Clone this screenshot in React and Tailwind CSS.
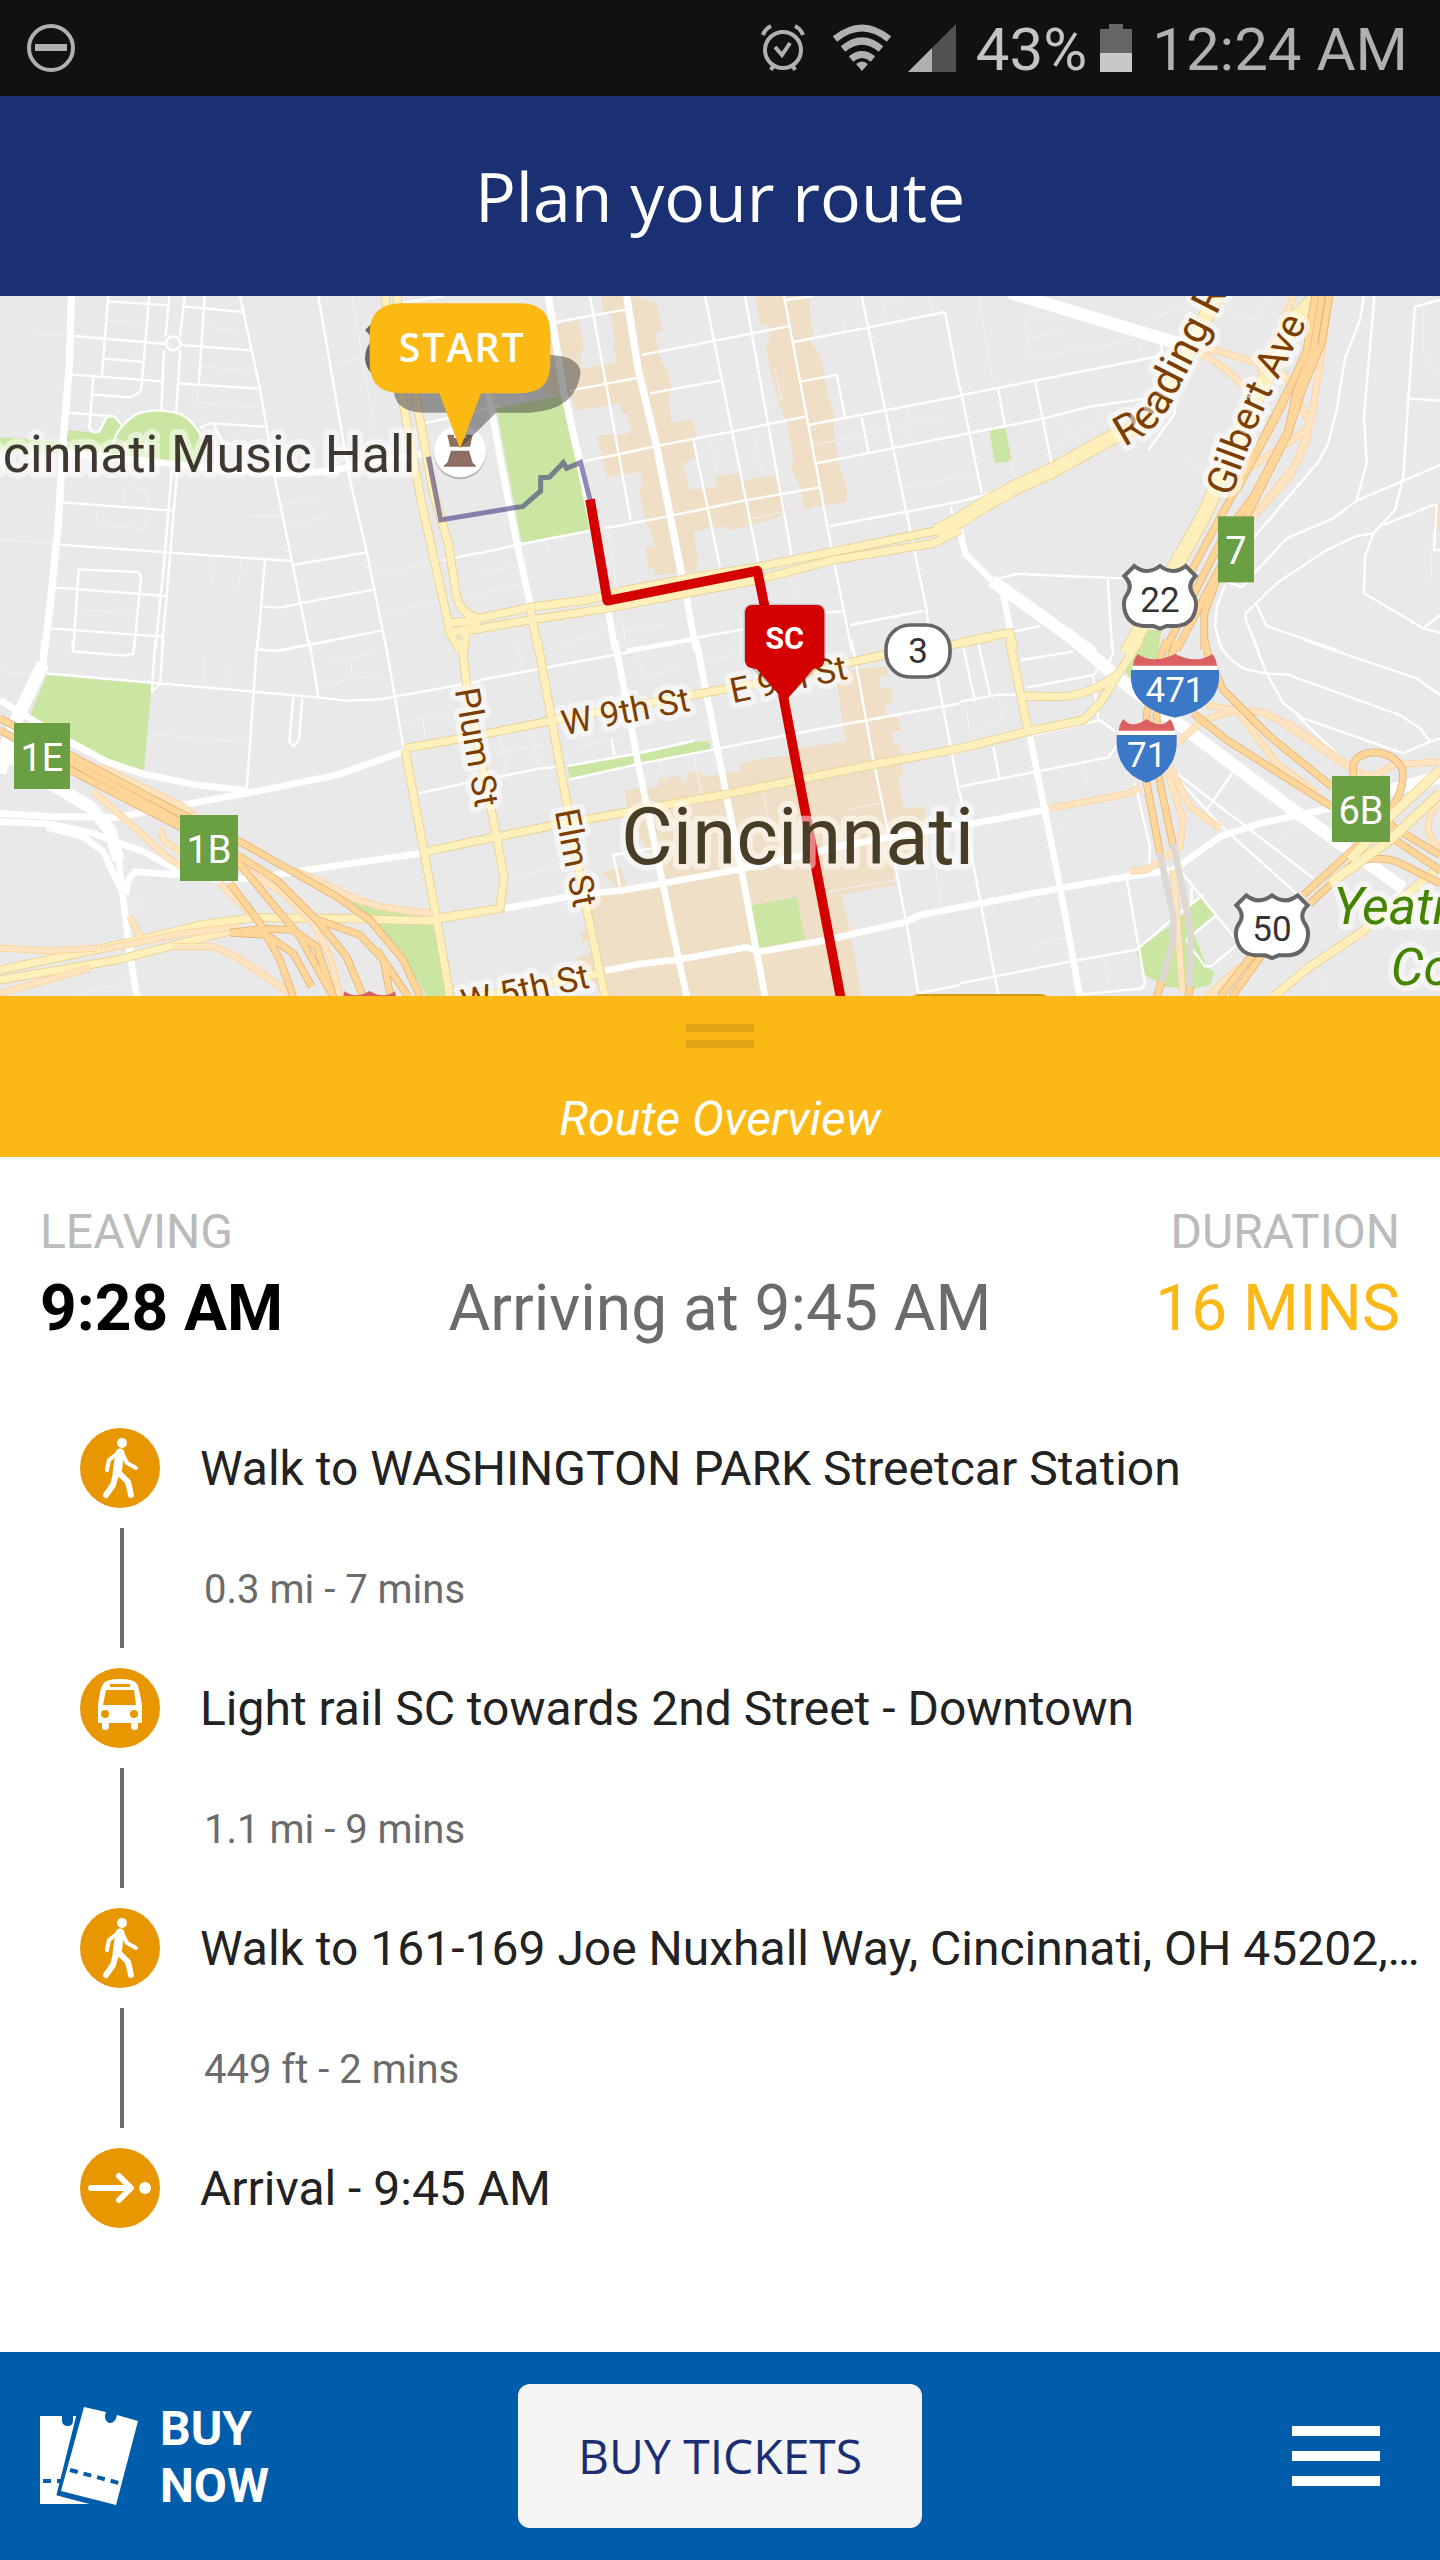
import React from "react";

// Map geometry, one entry per map tile. x / y is the origin of the tile.
const tiles = [
  {
    id: "nw",
    x: 0,
    y: -18,
    parks: [
      "M340 460Q362 400 410 372Q470 345 540 370Q585 400 605 450L602 524L330 500Z",
      "M205 420L300 430L322 380L345 382L368 408L340 450L330 502L190 484Z",
      "M0 442L195 455L190 490L0 482Z",
    ],
    shops: [],
    faint: [
      "M90 132L220 138M322 92L440 98M612 112L735 122M605 230L765 242M592 285V338L780 353M1000 220L1085 205M1055 18L1125 420",
      "M378 592L435 596L445 610L435 710L430 716L290 706V650M375 592L373 645M845 645L950 625M760 678L845 680M860 703L990 678",
      "M0 748L178 762M644 795L636 885M722 805L718 895M1120 852L1440 790M1145 970L1440 905M228 958L410 972M1100 260L1200 240",
    ],
    thin: [
      "M325 18L305 265M325 34L508 46M448 18L424 295Q420 312 390 322L280 314M508 18L497 140M492 180L484 360M554 18L540 140M541 180L528 370",
      "M519 139A21 21 0 1 0 520 139M554 50L730 66M614 18L596 285M222 138L497 162M541 165L753 181M312 206L432 216M216 254L490 274M536 280L777 296",
      "M280 262L268 410Q278 438 300 420L322 378L205 368M322 378L345 380L367 408M340 460Q350 410 410 372Q470 350 540 372Q580 390 605 440M600 415Q620 400 640 400L795 410M640 400L668 460L790 468",
      "M720 18L780 296L828 580L878 825L930 1080M955 18L1050 570L1100 785L1160 1080M185 637L522 662M178 764L500 787L872 813M878 825L1100 787",
      "M532 540L500 920L485 1080M515 540L495 790L466 1080M162 892L500 918M220 1080L236 838L410 846Q425 848 422 870L402 1080M150 1015L488 1040",
      "M795 810L772 1078M788 950L840 953L900 940L1125 898M770 1078L830 1083L1145 1022M1200 40L1330 18M1270 400L1440 365M1330 810L1440 788",
    ],
    mid: ["M190 488L320 500L520 522L680 540L850 550L980 545L1100 520L1275 490"],
    wide: ["M214 18L208 230L190 440L175 700L150 950L134 1080"],
    yellow: [
      "M1155 18L1215 370L1265 640L1345 1000L1350 1030L1380 1080",
      "M1190 18L1260 390L1300 610L1345 760L1370 920Q1385 975 1440 985",
      "M1345 1000L1440 990M1345 1028L1440 1012M1400 1010L1390 1090",
    ],
    broad: [],
    ramp: [],
    highway: [],
  },
  {
    id: "n",
    x: 1440,
    y: -18,
    parks: ["M48 355L250 315L330 720L125 760Z"],
    shops: [
      "M190 310L165 120L298 90L312 180L300 185L305 235L395 220L410 215L398 160L405 150L392 75L370 65L365 18H460L530 40L548 120L525 130L545 220L562 235L575 300L565 330L575 400L635 388L650 440L640 450L648 505L610 520L628 600L710 590L705 560L775 548L785 572L895 553L920 670L870 690L740 722L735 708L640 725L655 810L645 845L525 855L515 830H505L497 775L525 765L510 720L500 710L475 590L490 585L480 545L380 562L365 490L350 445L360 435L450 430L455 420L440 370L425 372L420 340L285 363L275 320Z",
      "M825 18H985L998 130L990 150L1012 185L1020 190L1038 280L1060 370L1062 440L1080 530L1100 590V635L972 658L960 590L935 540L940 500L920 400L900 350L870 240L855 160L870 150L865 105H842Z",
    ],
    faint: [
      "M690 450L712 555M820 420L850 560M860 340L910 325M885 235L905 330M1000 465L1400 382M1265 595L1440 560M1280 350L1300 460M1040 325L1085 318",
      "M385 730L440 1080M0 850L110 828M0 910L120 885M200 755L202 790M1210 40L1280 25M1215 40V80M1345 18L1360 70M800 690L915 665M925 860L980 1020M1090 90V120",
      "M400 1030L560 1000M230 1060L360 1035",
    ],
    thin: [
      "M205 100L440 58M330 18L452 690M270 302L480 262M305 515L420 492L520 470L770 422L975 380M485 195L930 108M510 310L720 272M675 18L835 815M795 18L935 795",
      "M912 18L1065 830L1115 1080M915 30L1000 18M940 156L1150 115L1395 66M960 275L1070 255L1095 380M985 405L1440 318M1010 520L1440 435",
      "M1145 18L1340 960L1350 1080M1395 66L1440 300M0 790L110 765L330 722M375 715L560 680L790 632L1020 592M640 450L720 830M1050 708L1440 635",
      "M1145 380L1165 485M440 1080L790 1018M1035 968L1095 963M1110 1005L1330 963M1412 650L1425 700M0 358L60 348",
    ],
    mid: ["M25 310L75 580L115 780L150 940", "M385 960L405 1080", "M620 920L628 970L648 1080"],
    wide: ["M205 18L250 300L300 520L382 920", "M440 18L475 240L530 470L575 700L605 855"],
    yellow: [
      "M-60 998L150 952L320 930L440 900L640 862L840 830L1060 785L1380 720L1440 690",
      "M-60 1026L150 990L380 955L830 870L1060 810L1360 760L1440 720",
      "M152 960L175 1080",
    ],
    broad: [],
    ramp: [],
    highway: [],
  },
  {
    id: "ne",
    x: 2880,
    y: -18,
    parks: ["M88 422L137 415L155 512L105 520Z"],
    shops: ["M1425 638H1440V722H1418Z"],
    faint: [
      "M55 18L100 290M190 75L215 205L530 148L545 200M205 145L310 125M190 85L265 72M570 80L700 50L780 18M800 55L880 90L935 18",
      "M155 265V285M305 375L320 450L280 478M320 450L430 385L420 355M0 558L50 550M150 510L165 575M705 475Q680 500 700 520L740 550M1390 50V180Q1395 230 1440 245M1418 720L1412 880",
    ],
    thin: [
      "M0 316L225 272L600 198M0 435L250 386L390 350L560 325M0 635L130 600M0 290L65 610M115 298L135 410M225 272L275 522M565 480L645 370V340M605 160V185L580 215",
      "M1212 18L1200 90L1155 205L1130 360L1105 460L1075 515L880 745M1243 18L1212 380L1220 520L1190 630M1440 30L1365 50L1345 325L1440 332",
      "M1345 325L1330 560L1305 660L1240 730L1215 800L1212 910L1390 1015L1440 1028M1390 1015L1440 975M1440 525L1190 632L1120 685L980 745L845 892L800 875",
      "M1240 730L1190 738L1100 780L950 880L857 970V990L895 1080M890 945L920 1008L1130 1080M795 885L770 950L765 1010L785 1080",
      "M1270 705L1420 645H1430L1422 780H1440M118 865L170 852L490 865M443 868L457 1080M160 1025L240 1008",
    ],
    mid: ["M0 720L15 790L95 870", "M125 890L150 1015"],
    wide: [],
    boulevard: ["M150 8L660 162", "M95 872L400 1090"],
    yellow: ["M0 1058L150 1028L162 1080"],
    broad: [
      "M-70 725L0 690L70 645L170 590L270 545L460 440L570 395L650 250L770 18",
      "M1075 18L1010 80L900 300L820 480L730 680L640 840L500 1090",
    ],
    ramp: [
      "M1000 18L960 120L900 250M1110 18L1060 350L1040 440L990 560L880 680",
      "M700 180L760 180L880 215L980 260L1045 390L1040 450L1010 520L880 680M720 190Q800 230 850 290M1040 420L860 540",
    ],
    highway: [
      "M1065 18L1040 180L1000 270L860 540L760 720L680 870",
      "M1085 18L1060 180L1010 300L985 420L880 620L790 740L615 1080",
      "M1108 18L1085 160L1030 290L985 430L860 680L650 1080",
      "M1000 270L960 360L830 600M770 870L733 970V1080",
    ],
  },
  {
    id: "sw",
    x: 0,
    y: 1032,
    parks: [
      "M140 105L455 133L432 392L320 355L205 300L90 225Z",
      "M1050 783L1140 810L1290 835L1308 870L1345 1070H1280L1200 930L1120 840Z",
    ],
    shops: [],
    faint: [
      "M0 95L135 102M450 282L740 307M615 40L610 135M690 78L688 148M995 65L1130 38M1050 55L1060 118M955 138L1140 100M1205 248L1360 215M1268 240L1280 305M1345 150L1355 215M385 792H450M220 1065L390 1028",
    ],
    thin: [
      "M140 100L760 155L955 172L1040 182L1140 178L1440 123M466 0L455 155L480 132L490 0M772 0L740 450M880 170L868 305L880 320L897 300L907 175M928 0L955 170",
      "M1155 0L1210 320M218 0V34L370 47L400 42L403 0M775 28L830 33L1005 0M1255 460L1440 420",
    ],
    mid: [
      "M0 180L80 230L200 300L320 365L430 402L590 435L735 450",
      "M530 498L740 460L1010 405L1210 335",
      "M0 520L150 530L350 532L530 500",
      "M0 545L150 552L280 580L430 635L530 690L650 718L760 715L920 690L1260 640",
      "M140 562L250 590L310 635L340 700L370 760",
      "M540 705L405 695L385 720L378 765",
      "M355 650L370 780L390 940L410 1070",
    ],
    wide: ["M134 0L130 70L60 210"],
    boulevard: ["M130 70L60 215L0 360", "M0 330L150 430L270 500L330 570L355 660", "M60 210L20 330L0 400"],
    yellow: [
      "M1215 325L1440 285M1215 328L1310 838L1350 1070M1280 635L1440 600M1310 838L1440 815",
      "M0 990L400 905L600 855L760 833L1000 835L1310 843M0 1020L350 960L700 870",
    ],
    broad: [],
    ramp: [
      "M300 380L550 500L600 545M280 455L400 560L500 650L560 690",
      "M485 565L490 600L560 650L720 680L850 760L940 850L990 950L1020 1070M660 730L750 820",
      "M880 690L950 720L1060 775L1140 800L1300 822M0 925L150 932L290 925M0 1060L270 985M390 830L420 890",
      "M520 920L640 920L700 945L880 1065M300 930L550 880L720 860",
    ],
    highway: [
      "M0 235L210 345L540 520L720 605L1010 770L1110 840L1210 960L1260 1070",
      "M0 270L210 390L500 540L720 650L830 720L950 840L1040 950L1090 1070",
      "M210 365L540 545L700 650L800 770L900 890L960 1000L1000 1070",
      "M690 730L780 850L840 960L880 1070M690 878L790 866L880 870L950 920L1000 1070M690 878L800 885L880 940L935 1040",
      "M950 838L1080 885L1150 960L1170 1060M1130 930L1225 1070",
    ],
  },
  {
    id: "s",
    x: 1440,
    y: 1032,
    parks: [
      "M262 380L465 345L640 306L688 303L692 330L485 368L270 415Z",
      "M810 797L950 771L975 898L835 925Z",
    ],
    shops: [
      "M435 450L535 440V418L600 408L605 425L620 420V398L660 392L668 410L780 393L785 370L850 355L940 345L955 325L1098 303L1090 260L1070 120L1125 85L1220 80L1225 105L1197 115L1200 145L1235 142L1240 185L1215 195L1222 230L1255 232L1262 270L1235 280L1240 310L1262 318L1268 400L1255 415L1272 505L1335 500L1345 620L1240 660L1245 735L1085 765L1110 870L1145 1070H390L300 985L290 948L335 940L330 905L308 908L303 875L325 870L315 770L420 755L365 695L425 682L440 740L550 720L500 620L450 560Z",
    ],
    faint: [
      "M110 0L130 90M60 280L80 400M150 250L175 385M0 350L210 310M90 710L250 680M470 20L490 110L595 90M300 320L420 295M540 360L560 430M640 340L665 460M660 65L790 40M1045 755L1245 720M850 460L870 560M1100 510L1200 490M1360 640L1385 800",
    ],
    thin: [
      "M0 120L640 0M60 410L180 385L250 380M262 378L465 342L640 303M270 418L485 370L1000 270L1230 228L1440 190M1115 0L1180 360L1250 700L1285 880L1315 1060L1440 1035",
      "M1370 100L1440 470M395 295L403 345M420 740L400 645L515 625",
    ],
    mid: [
      "M405 0L470 350L550 740L620 1070",
      "M648 0L740 470L790 720L855 1070",
      "M75 805L310 762L420 752L550 730L780 688L1100 615L1440 555",
      "M375 992L480 972L600 958L800 922L840 935L1040 900L1280 845L1320 825L1440 802",
    ],
    wide: [],
    yellow: [
      "M172 0L215 240L310 760L375 1070",
      "M-55 0L-40 140L0 340L50 590L72 715L60 805L-130 835",
      "M0 285L225 240L830 130L1210 45L1440 10",
      "M-10 603L225 555L735 463L1200 370L1440 325M-60 1080L365 1000",
    ],
    broad: [],
    ramp: [],
    highway: [],
  },
  {
    id: "se",
    x: 2880,
    y: 1032,
    parks: [
      "M690 800L725 772L768 822L700 875L740 980L765 995L750 1035L700 1048L620 1040L555 1005L527 932L640 850Z",
      "M560 -30H605L590 60L510 115L495 90Z",
    ],
    shops: [],
    faint: [
      "M15 185L30 280L115 250L125 230L115 170M365 180L375 205M370 375L385 440M285 578L310 570M215 915L315 895M430 950L450 1035M940 625L1010 540M1055 990L1105 1045M760 1000L850 910",
    ],
    thin: [
      "M10 20L45 185M55 10L90 165M0 185L120 163L175 165M183 60L340 35M200 143L400 105L415 85M455 0L460 40L440 80M0 440L240 393L445 352L475 310M100 320L118 415M220 285L420 240L465 275M400 110L415 240",
      "M525 430L570 620L568 680M0 460L60 780L115 1065M0 1030L330 965L525 930M500 715L555 1030L545 1045L350 1065M527 932L645 830L730 765",
      "M775 0Q790 50 850 85Q920 105 980 103L1320 225L1380 265L1410 305L1330 340L1030 235L970 190L920 100L880 0M1030 0L1370 115L1440 165M1410 305L1440 295M1010 225L1170 380",
      "M630 390L780 555L1020 770M820 395L740 510M650 400L1060 715M660 690L820 890M678 900L735 980L755 978L830 915M680 900L770 825M695 740V790",
    ],
    mid: [
      "M210 290L300 740L360 1070",
      "M0 558L265 508",
      "M0 802L300 745L500 710L640 690L780 590L900 550L1110 505",
    ],
    wide: [],
    boulevard: ["M320 -20L480 120L640 240L1000 510L1330 745", "M1290 450L1440 410"],
    yellow: [
      "M148 0L205 275M540 0L470 110L420 190L370 240L200 275L0 325M470 105Q400 160 310 170L190 168M0 10L100 -10",
      "M940 1070L1050 980L1200 880L1440 680",
    ],
    broad: [],
    ramp: [
      "M740 195L820 210L900 215L1000 260L1200 400M650 310L730 240L850 205M830 210L950 370L1070 460M940 230L1180 390",
      "M630 380L690 500L780 565M620 390L670 540L660 620L560 690L510 693M270 505L510 460L540 440M1190 405H1250L1300 375L1440 365",
      "M1440 480Q1390 540 1410 590L1440 630M740 1070L840 980M640 690L668 1060",
    ],
    highway: [
      "M620 0L600 60L560 220V430L600 640M650 0L590 180V380L640 620M735 0L745 50L790 150L930 290L1116 440M700 220L800 300L1116 500",
      "M1180 410V370Q1200 335 1250 337Q1310 345 1328 390Q1335 450 1290 510",
      "M1030 765L1200 610L1300 540M1050 790L1180 670Q1250 645 1310 665L1440 730M1290 555L1440 645M1290 590L1440 690",
      "M780 1070L880 940M815 1070L910 940M605 1025L590 1070M690 1040L685 1070",
    ],
    late: ["M1110 730L1290 600L1440 460M1170 660L1290 530L1440 390"],
    tunnel: ["M600 640L640 830V900L605 1025M640 610L692 870L690 1040"],
  },
];

function Layer({ kind, ...props }) {
  return (
    <g fill="none" strokeLinejoin="round" {...props}>
      {tiles.map((t) => (
        <g key={t.id} transform={`translate(${t.x} ${t.y})`}>
          {(t[kind] || []).map((d) => (
            <path key={d} d={d} />
          ))}
        </g>
      ))}
    </g>
  );
}

const halo = {
  stroke: "#ffffff",
  strokeOpacity: 0.5,
  strokeWidth: 34,
  strokeLinejoin: "round",
  paintOrder: "stroke",
};

function Exit({ x, y, w = 174, children }) {
  return (
    <g transform={`translate(${x} ${y})`}>
      <rect width={w} height="198" fill="#6a9f43" />
      <text x={w / 2} y="143" fontSize="114" fill="#fff" textAnchor="middle">
        {children}
      </text>
    </g>
  );
}

function UsShield({ x, y, children }) {
  return (
    <g transform={`translate(${x} ${y})`}>
      <path
        d="M-77 -92Q-40 -62 0 -92Q40 -62 77 -92L107 -62Q80 -36 98 -8Q112 10 107 36Q98 84 50 88H20L0 96L-20 88H-50Q-98 84 -107 36Q-112 10 -98 -8Q-80 -36 -107 -62Z"
        fill="#fff"
        stroke="#666"
        strokeWidth="12"
      />
      <text y="45" fontSize="105" fill="#333" textAnchor="middle">
        {children}
      </text>
    </g>
  );
}

function Interstate({ x, y, half, children }) {
  const w = half;
  return (
    <g transform={`translate(${x} ${y})`}>
      <path
        d={`M${-w + 6} 36Q${-w + 8} 15 ${-w + 20} 0Q${-w / 2} 32 0 0Q${w / 2} 32 ${w - 20} 0Q${w - 8} 15 ${w - 6} 36Z`}
        fill="#db6062"
      />
      <path d={`M${-w + 5} 35H${w - 5}V48H${-w + 5}Z`} fill="#fff" />
      <path d={`M${-w} 48H${w}V80Q${w - 10} 165 0 191Q${-w + 10} 165 ${-w} 80Z`} fill="#3b78c8" />
      <text y="145" fontSize="105" fill="#fff" textAnchor="middle">
        {children}
      </text>
    </g>
  );
}

function RouteMap() {
  return (
    <svg
      viewBox="0 0 4320 2100"
      preserveAspectRatio="xMidYMid slice"
      className="block h-[700px] w-full bg-[#e9e9e9]"
      role="img"
      aria-label="Map of Cincinnati with the route"
    >
      <Layer kind="shops" fill="#f0dfc7" />
      <Layer kind="parks" fill="#cbe6a3" />
      <Layer kind="faint" stroke="#f2f2f2" strokeWidth="3" />
      <Layer kind="thin" stroke="#fff" strokeWidth="7" />
      <Layer kind="mid" stroke="#fff" strokeWidth="20" />
      <Layer kind="wide" stroke="#fff" strokeWidth="22" />
      <Layer kind="boulevard" stroke="#fff" strokeWidth="38" />
      <Layer kind="yellow" stroke="#e6d193" strokeWidth="27" />
      <Layer kind="broad" stroke="#e6d193" strokeWidth="47" />
      <Layer kind="yellow" stroke="#ffefba" strokeWidth="22" />
      <Layer kind="broad" stroke="#ffefba" strokeWidth="42" />
      <Layer kind="ramp" stroke="#ffd29a" strokeWidth="21" />
      <Layer kind="ramp" stroke="#ffe4c2" strokeWidth="16" />
      <Layer kind="highway" stroke="#e5b377" strokeWidth="23" />
      <Layer kind="highway" stroke="#ffd699" strokeWidth="18" />
      <Layer kind="late" stroke="#e6d193" strokeWidth="31" />
      <Layer kind="late" stroke="#ffefba" strokeWidth="26" />
      <Layer kind="tunnel" stroke="#ddd8d2" strokeWidth="20" />

      {/* place marker of the music hall */}
      <g transform="translate(1380 466)">
        <circle cy="6" r="78" fill="#b5b5b5" />
        <circle r="78" fill="#fff" />
        <path d="M-38 -50H-18V-40H-9V-50H9V-40H18V-50H38L30 -14H-30ZM-27 -2H27L38 34L47 42V46H-48V42L-38 34Z" fill="#8d6e63" />
      </g>

      {/* walking leg */}
      <path
        d="M1285 482L1322 672L1550 634L1568 632L1622 585V545L1648 544L1690 500L1700 517L1742 499L1770 612"
        fill="none"
        stroke="#332a78"
        strokeOpacity="0.55"
        strokeWidth="15"
      />
      {/* streetcar leg */}
      <path
        d="M1770 610L1822 914L2272 824L2345 1180L2350 1202L2525 2120"
        fill="none"
        stroke="#d40000"
        strokeWidth="29"
        strokeLinejoin="round"
      />

      {/* place and street names */}
      <g fontSize="156">
        <text x="1246" y="527" textAnchor="end" fill="#3f3831" {...halo}>
          Cincinnati Music Hall
        </text>
        <g fontStyle="italic" fill="#448400">
          <text x="4000" y="1885" {...halo}>
            Yeatman's
          </text>
          <text x="4172" y="2066" {...halo}>
            Cove
          </text>
        </g>
      </g>
      <text x="1863" y="1704" fontSize="239" fill="#483d27" {...halo}>
        Cincinnati
      </text>
      <path id="reading" d="M3372 452C3440 420 3490 380 3530 290L3660 36L3760 -160" fill="none" />
      <path id="gilbert" d="M3690 605Q3712 560 3722 520L3772 385L3832 255L3930 60" fill="none" />
      <g fontSize="104" fill="#7c3e03">
        <text fontSize="127" {...halo}>
          <textPath href="#reading">Reading Rd</textPath>
        </text>
        <text fontSize="119" {...halo}>
          <textPath href="#gilbert">Gilbert Ave</textPath>
        </text>
        <text transform="translate(1692 1318) rotate(-11)" {...halo}>
          W 9th St
        </text>
        <text transform="translate(2198 1222) rotate(-12)" {...halo}>
          E 9th St
        </text>
        <text transform="translate(1364 1182) rotate(80)" {...halo}>
          Plum St
        </text>
        <text transform="translate(1664 1546) rotate(79)" {...halo}>
          Elm St
        </text>
        <text transform="translate(1392 2155) rotate(-12)" {...halo}>
          W 5th St
        </text>
      </g>

      {/* road shields and exits */}
      <Exit x={3654} y={661} w={108}>7</Exit>
      <Exit x={42} y={1281} w={168}>1E</Exit>
      <Exit x={540} y={1557}>1B</Exit>
      <Exit x={3996} y={1440}>6B</Exit>
      <UsShield x={3480} y={902}>22</UsShield>
      <UsShield x={3816} y={1890}>50</UsShield>
      <Interstate x={3525} y={1074} half={132}>471</Interstate>
      <Interstate x={3440} y={1269} half={90}>71</Interstate>
      <path d="M1030 2100L1033 2086Q1070 2110 1108 2085Q1150 2110 1185 2086L1188 2100Z" fill="#db6062" />
      <rect x="2658" y="987" width="192" height="156" rx="72" fill="#fff" stroke="#666" strokeWidth="11" />
      <text x="2754" y="1102" fontSize="105" fill="#333" textAnchor="middle">
        3
      </text>
      <rect x="2730" y="2094" width="420" height="40" rx="30" fill="#d99a1a" />

      {/* streetcar stop */}
      <g transform="translate(2235 927)">
        <path d="M25 -4H214Q242 -4 242 25V168L120 286L-4 168V25Q-4 -4 25 -4Z" fill="#000" fillOpacity="0.18" />
        <path
          d="M25 0H213Q238 0 238 25V165Q238 188 215 190L205 192L120 290L35 192L23 190Q0 188 0 165V25Q0 0 25 0Z"
          fill="#d40000"
        />
        <text x="119" y="131" fontSize="92" fontWeight="700" fill="#fff" textAnchor="middle">
          SC
        </text>
      </g>

      {/* start bubble */}
      <path d="M1120 78L1095 102L1106 114L1120 130ZM1120 130Q1095 150 1095 190Q1098 220 1120 236Z" fill="#666" />
      <path
        d="M1182 290Q1190 350 1280 350H1345L1380 457L1488 350H1590Q1730 342 1742 228Q1735 180 1650 177L1400 200Z"
        fill="#3f3f3f"
        fillOpacity="0.5"
      />
      <path
        d="M1205 22H1560Q1651 22 1651 112V202Q1651 292 1560 292H1443L1380 458L1318 292H1205Q1109 292 1109 202V112Q1109 22 1205 22Z"
        fill="#fcb813"
      />
      <text x="1196" y="197" fontSize="118" fontWeight="600" fill="#fff" className="font-['Open_Sans',sans-serif] tracking-wider">
        START
      </text>
    </svg>
  );
}

function StatusBar() {
  return (
    <div className="flex h-24 items-center bg-[#111] pr-8 pl-[26px] text-[60px] leading-none text-[#b0b0b0]">
      <svg viewBox="0 0 50 50" className="mr-auto size-[50px]" aria-hidden="true">
        <circle cx="25" cy="25" r="22" fill="none" stroke="currentColor" strokeWidth="4" />
        <rect x="9" y="21" width="32" height="7" fill="currentColor" />
      </svg>
      <svg viewBox="0 0 44 48" className="mr-[27px] h-12 w-11" fill="none" stroke="currentColor" aria-hidden="true">
        <circle cx="22" cy="26" r="18" strokeWidth="4" />
        <path d="M14 23L21 31L29 19" strokeWidth="4" />
        <path d="M2 11Q4 5 10 2M42 11Q40 5 34 2M10 46L13 40M34 46L31 40" strokeWidth="4" />
      </svg>
      <svg viewBox="0 0 60 48" className="mr-4 h-12 w-[60px]" fill="none" stroke="currentColor" strokeWidth="7" aria-hidden="true">
        <path d="M3 15Q30 -7 57 15" />
        <path d="M11 25Q30 9 49 25" />
        <path d="M19 35Q30 26 41 35" />
        <path d="M30 47L24 40Q30 35 36 40Z" fill="currentColor" stroke="none" />
      </svg>
      <svg viewBox="0 0 48 48" className="mr-5 size-12" aria-hidden="true">
        <path d="M48 0V48H0Z" fill="#515151" />
        <path d="M24 24V48H0Z" fill="#b0b0b0" />
      </svg>
      <span className="pt-1 text-[#c4c4c4]">43%</span>
      <svg viewBox="0 0 32 48" className="mr-5 ml-[13px] h-12 w-8" aria-hidden="true">
        <path d="M9 0H23V5H32V48H0V5H9Z" fill="#666" />
        <path d="M0 29H32V48H0Z" fill="#c8c8c8" />
      </svg>
      <span className="pt-1">12:24 AM</span>
    </div>
  );
}

function WalkIcon() {
  return (
    <svg viewBox="0 0 80 80" className="size-20 shrink-0" aria-hidden="true">
      <circle cx="40" cy="40" r="40" fill="#e99700" />
      <circle cx="42" cy="15" r="5" fill="#fff" />
      <g fill="none" stroke="#fff" strokeLinecap="round" strokeLinejoin="round">
        <path d="M40 25L37 45" strokeWidth="9" />
        <path d="M38 25L29 32L27 42" strokeWidth="4" />
        <path d="M43 27L47 35L56 40" strokeWidth="4" />
        <path d="M36 46L33 57L26 67" strokeWidth="6" />
        <path d="M38 44L48 54L51 67" strokeWidth="6" />
      </g>
    </svg>
  );
}

function BusIcon() {
  return (
    <svg viewBox="0 0 80 80" className="size-20 shrink-0" aria-hidden="true">
      <circle cx="40" cy="40" r="40" fill="#e99700" />
      <path
        d="M40 11Q54 11 57 16Q59 19 62 37V55H58V59Q58 62 55 62Q51 62 51 59V55H29V59Q29 62 25 62Q22 62 22 59V55H18V37Q20 20 23 16Q26 11 40 11Z"
        fill="#fff"
      />
      <path d="M30 16H50V19H30ZM26 22H54L56 37H23Z" fill="#e99700" />
      <circle cx="25" cy="46" r="4" fill="#e99700" />
      <circle cx="54" cy="46" r="4" fill="#e99700" />
    </svg>
  );
}

function ArrivalIcon() {
  return (
    <svg viewBox="0 0 80 80" className="size-20 shrink-0" aria-hidden="true">
      <circle cx="40" cy="40" r="40" fill="#e99700" />
      <path d="M11 40H50M39 28L51 40L39 52" fill="none" stroke="#fff" strokeWidth="6" strokeLinejoin="round" strokeLinecap="round" />
      <circle cx="65" cy="40" r="6" fill="#fff" />
    </svg>
  );
}

const steps = [
  { icon: WalkIcon, title: "Walk to WASHINGTON PARK Streetcar Station", info: "0.3 mi - 7 mins" },
  { icon: BusIcon, title: "Light rail SC towards 2nd Street - Downtown", info: "1.1 mi - 9 mins" },
  { icon: WalkIcon, title: "Walk to 161-169 Joe Nuxhall Way, Cincinnati, OH 45202, USA", info: "449 ft - 2 mins" },
  { icon: ArrivalIcon, title: "Arrival - 9:45 AM" },
];

function Steps() {
  return (
    <ol className="pr-5 pl-20">
      {steps.map(({ icon: Icon, title, info }) => (
        <li key={title}>
          <div className="flex items-center gap-10">
            <Icon />
            <p className="truncate pt-0.5 text-[48px] leading-[64px] text-[#222]">{title}</p>
          </div>
          {info && (
            <div className="my-5 ml-10 flex h-30 items-center gap-20">
              <div className="h-full w-1 bg-[#6b6b6b]" />
              <p className="pt-1 text-[40px] text-[#6b6b6b]">{info}</p>
            </div>
          )}
        </li>
      ))}
    </ol>
  );
}

function TicketsIcon() {
  return (
    <svg viewBox="0 0 98 98" className="size-[98px]" aria-hidden="true">
      <path d="M0 9H22V13Q22 19 28 19Q33 19 33 13V9H38L20 84L54 97H0Z" fill="#fff" />
      <path d="M3 74H22" stroke="#005dab" strokeWidth="4" strokeDasharray="8 6" />
      <path d="M42 -2L20 86L76 101" fill="none" stroke="#005dab" strokeWidth="6" />
      <path d="M44 0L66 5Q63 13 69 16Q75 17 77 8L98 14L76 98L21 84Z" fill="#fff" />
      <path d="M30 63L79 76" stroke="#005dab" strokeWidth="4" strokeDasharray="8 6" />
    </svg>
  );
}

function BottomBar() {
  return (
    <nav className="mt-auto flex h-52 items-center bg-[#005dab] px-10">
      <div className="flex-1">
        <button className="flex items-center gap-[22px] text-left text-[48px] leading-[57px] font-bold text-white">
          <TicketsIcon />
          <span className="pt-0.5">
            BUY
            <br />
            NOW
          </span>
        </button>
      </div>
      <button className="h-36 w-[404px] rounded-xl bg-[#f5f5f5] font-['Open_Sans',sans-serif] text-[48px] text-[#1a2f73]">
        BUY TICKETS
      </button>
      <div className="flex flex-1 justify-end">
        <button className="mr-5 flex w-22 flex-col gap-[15px]" aria-label="Menu">
          <span className="h-2.5 w-full bg-white" />
          <span className="h-2.5 w-full bg-white" />
          <span className="h-2.5 w-full bg-white" />
        </button>
      </div>
    </nav>
  );
}

function App() {
  return (
    <div className="flex min-h-screen flex-col bg-white font-[Roboto,sans-serif]">
      <StatusBar />
      <header className="flex h-50 items-center justify-center bg-[#1a3073]">
        <h1 className="font-['Open_Sans',sans-serif] text-[68px] text-white">Plan your route</h1>
      </header>
      <RouteMap />
      <section className="flex h-[161px] flex-col items-center bg-[#fcb814] pt-7">
        <div className="h-2 w-17 bg-[#e2a412]" />
        <div className="mt-2 h-2 w-17 bg-[#e2a412]" />
        <h2 className="mt-10 text-[48px] leading-[62px] text-white italic">Route Overview</h2>
      </section>
      <section className="flex items-end justify-between px-10 pt-11 pb-[81px] text-[64px] leading-[76px]">
        <div className="flex-1">
          <p className="mb-2 text-[48px] leading-[62px] text-[#bbb]">LEAVING</p>
          <p className="font-bold text-black">9:28 AM</p>
        </div>
        <p className="text-[#6b6b6b]">Arriving at 9:45 AM</p>
        <div className="flex-1 text-right">
          <p className="mb-2 text-[48px] leading-[62px] text-[#bbb]">DURATION</p>
          <p className="text-[#fcb814]">16 MINS</p>
        </div>
      </section>
      <Steps />
      <BottomBar />
    </div>
  );
}

export default App;
